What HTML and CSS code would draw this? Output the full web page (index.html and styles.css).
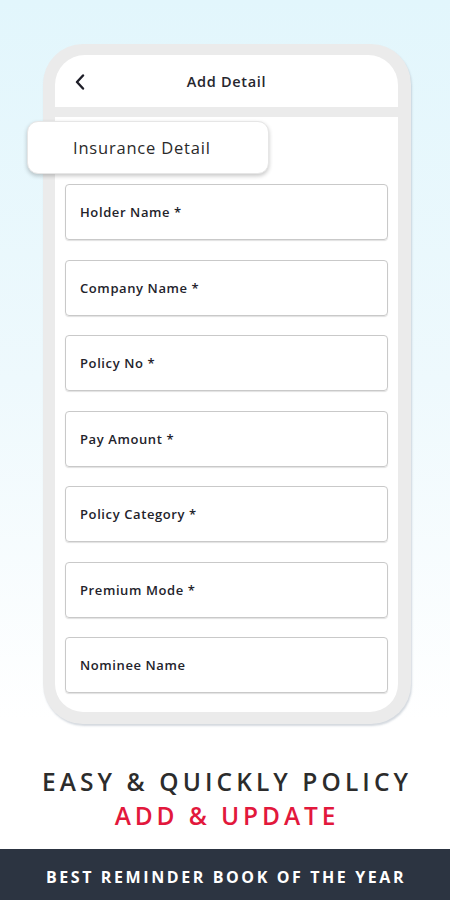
FILE: index.html
```html
<!DOCTYPE html>
<html>
<head>
<meta charset="utf-8">
<link rel="stylesheet" href="styles.css">
</head>
<body>
<div class="page">
  <div class="phone">
    <div class="screen-head">
      <svg class="back" width="10" height="16" viewBox="0 0 10 16"><polyline points="8,1.5 2,8 8,14.5" fill="none" stroke="#1e1e28" stroke-width="2.4" stroke-linecap="round" stroke-linejoin="round"/></svg>
      <div class="title">Add Detail</div>
    </div>
    <div class="screen-body">
      <div class="tab">Insurance Detail</div>
      <div class="fields">
        <div class="field">Holder Name *</div>
        <div class="field">Company Name *</div>
        <div class="field">Policy No *</div>
        <div class="field">Pay Amount *</div>
        <div class="field">Policy Category *</div>
        <div class="field">Premium Mode *</div>
        <div class="field">Nominee Name</div>
      </div>
    </div>
  </div>
  <div class="promo">
    <div class="line1">EASY &amp; QUICKLY POLICY</div>
    <div class="line2">ADD &amp; UPDATE</div>
  </div>
  <div class="bar">BEST REMINDER BOOK OF THE YEAR</div>
</div>
</body>
</html>
```
FILE: styles.css
```css
* { box-sizing: border-box; }
html, body { margin: 0; padding: 0; }
body {
  width: 450px;
  height: 900px;
  overflow: hidden;
  font-family: "Open Sans", "Noto Sans", sans-serif;
}
.page {
  width: 450px;
  height: 900px;
  display: flex;
  flex-direction: column;
  background: linear-gradient(180deg, #e2f6fc 0px, #eef9fd 380px, #ffffff 720px);
}
.phone {
  margin: 44px 0 0 43px;
  width: 368px;
  height: 680px;
  background: #ebebeb;
  border-radius: 40px;
  padding: 11px 13px 12px 12px;
  display: flex;
  flex-direction: column;
  gap: 10px;
  box-shadow: 1px 2px 2px rgba(160, 170, 185, 0.45);
}
.screen-head {
  height: 52px;
  background: #fff;
  border-radius: 30px 30px 0 0;
  display: flex;
  align-items: center;
  position: relative;
  flex: none;
}
.back {
  margin-left: 20px;
  margin-top: 2px;
}
.title {
  position: absolute;
  left: 0;
  right: 0;
  text-align: center;
  font-size: 14.5px;
  font-weight: 600;
  color: #26262e;
  letter-spacing: 0.7px;
  margin-top: 1px;
}
.screen-body {
  flex: 1;
  background: #fff;
  border-radius: 0 0 28px 28px;
  padding: 4px 10px 0 10px;
  display: flex;
  flex-direction: column;
}
.tab {
  margin-left: -38px;
  width: 242px;
  height: 53px;
  background: #fff;
  border: 1px solid #e6e6e6;
  border-radius: 11px;
  box-shadow: 0 2px 4px rgba(0, 0, 0, 0.22);
  display: flex;
  align-items: center;
  padding-left: 45px;
  font-size: 16.5px;
  color: #2a2a2a;
  letter-spacing: 0.8px;
}
.fields {
  margin-top: 10px;
  display: flex;
  flex-direction: column;
  gap: 19.5px;
}
.field {
  height: 56px;
  border: 1px solid #c9c9c9;
  border-radius: 4px;
  box-shadow: 0 1px 1px rgba(0, 0, 0, 0.12);
  display: flex;
  align-items: center;
  padding-left: 14px;
  font-size: 13px;
  font-weight: 600;
  letter-spacing: 0.6px;
  color: #23232b;
}
.promo {
  flex: 1;
  display: flex;
  flex-direction: column;
  align-items: center;
  justify-content: center;
  padding-top: 24px;
  font-weight: 600;
}
.line1 {
  font-size: 24.5px;
  letter-spacing: 4.1px;
  color: #2c2c2c;
  line-height: 34px;
  margin-right: -4px;
}
.line2 {
  font-size: 24.5px;
  letter-spacing: 3.9px;
  color: #e2183c;
  line-height: 34px;
  margin-right: -4px;
}
.bar {
  height: 51px;
  flex: none;
  background: #2c3441;
  color: #fff;
  display: flex;
  align-items: center;
  justify-content: center;
  font-size: 16px;
  font-weight: 700;
  letter-spacing: 2.6px;
  padding-top: 4px;
  padding-left: 2px;
}
```
